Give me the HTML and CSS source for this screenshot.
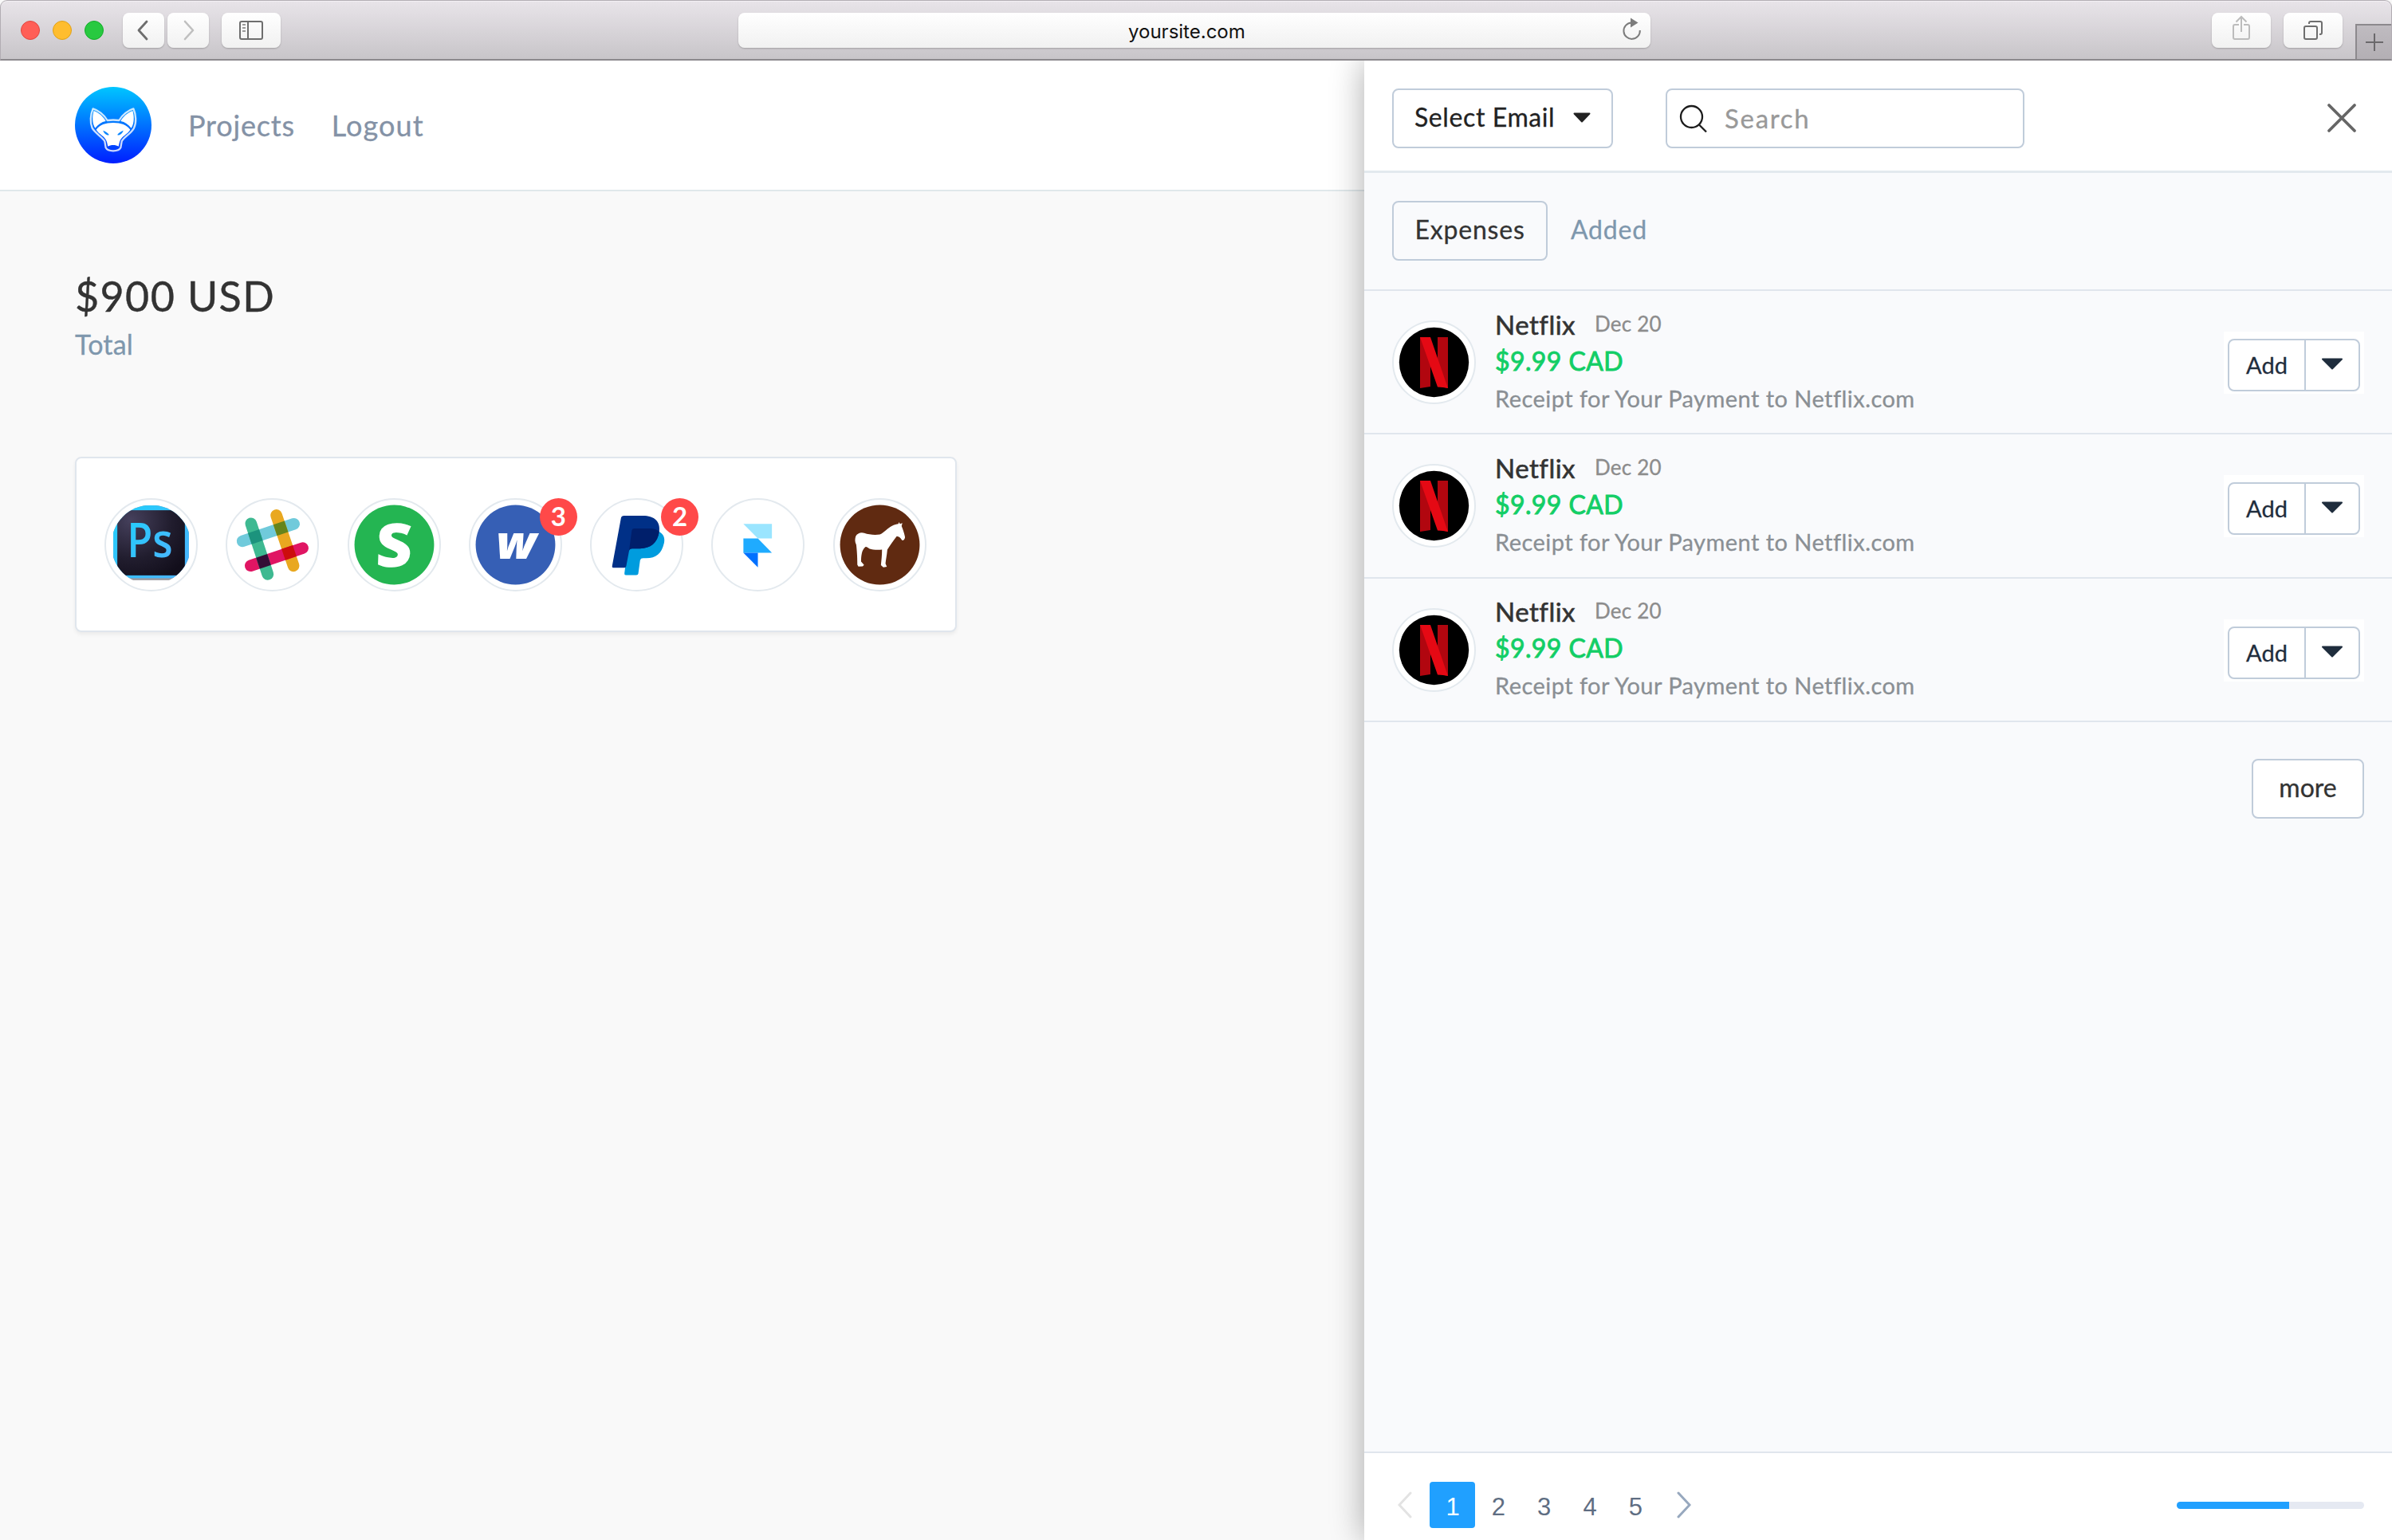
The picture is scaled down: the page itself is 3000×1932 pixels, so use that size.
FILE: index.html
```html
<!DOCTYPE html>
<html lang="en">
<head>
<meta charset="utf-8">
<title>yoursite.com</title>
<link rel="stylesheet" href="styles.css">
</head>
<body>
<div class="browser">
  <header class="toolbar">
    <div class="lights"><i class="light red"></i><i class="light yellow"></i><i class="light green"></i></div>
    <div class="tool back"><svg width="16" height="28" viewBox="0 0 16 28"><path d="M13 3 3 14 13 25" fill="none" stroke="#6e6e6e" stroke-width="2.8" stroke-linecap="round" stroke-linejoin="round"/></svg></div>
    <div class="tool forward"><svg width="16" height="28" viewBox="0 0 16 28"><path d="M2 3 12 14 2 25" fill="none" stroke="#bfbfbf" stroke-width="2.6" stroke-linecap="round" stroke-linejoin="round"/></svg></div>
    <div class="tool side"><svg width="30" height="24" viewBox="0 0 30 24"><g fill="none" stroke="#6e6e6e" stroke-width="2"><rect x="1" y="1" width="28" height="22" rx="2"/><path d="M11 1V23"/></g><path d="M4 5H8M4 9H8M4 13H8" stroke="#9a9a9a" stroke-width="2"/></svg></div>
    <div class="address"><span class="url">yoursite.com</span>
      <svg class="reload" width="26" height="30" viewBox="0 0 26 30"><path d="M12 7.5A10.2 10.2 0 1 0 22.8 17" fill="none" stroke="#7c7c7c" stroke-width="2"/><path d="M11 1.5 20.5 7.5 11 13.5Z" fill="#7c7c7c"/></svg>
    </div>
    <div class="tool share"><svg width="24" height="32" viewBox="0 0 24 32"><g fill="none" stroke="#bcbcbc" stroke-width="2"><path d="M9 12H4A2 2 0 0 0 2 14V28A2 2 0 0 0 4 30H20A2 2 0 0 0 22 28V14A2 2 0 0 0 20 12H15"/><path d="M12 21V2M5.5 8.5 12 2 18.500 8.500"/></g></svg></div>
    <div class="tool tabs"><svg width="26" height="26" viewBox="0 0 26 26"><g fill="none" stroke="#6e6e6e" stroke-width="2"><rect x="2" y="8" width="16" height="16" rx="2"/><path d="M8 5V4A2 2 0 0 1 10 2H22A2 2 0 0 1 24 4V16A2 2 0 0 1 22 18H21"/></g></svg></div>
    <div class="newtab"><svg width="22" height="22" viewBox="0 0 22 22"><path d="M11 0V22M0 11H22" stroke="#6b696c" stroke-width="2"/></svg></div>
  </header>

  <div class="page">
    <main class="main">
      <nav class="nav">
        <svg class="logo" viewBox="6 5 288 288">
          <defs><linearGradient id="sky" x1="0" y1="0" x2="0" y2="1"><stop offset="0" stop-color="#00c6ff"/><stop offset="1" stop-color="#001eff"/></linearGradient></defs>
          <circle cx="150" cy="149" r="144" fill="url(#sky)"/>
          <path d="M74 87C92 92 116 110 128 131C142 129 158 129 172 131C184 110 208 92 226 87C236 110 238 140 228 160C218 180 190 194 182 210L178 234C170 250 130 250 122 234L118 210C110 194 82 180 71 160C62 140 64 110 74 87Z" fill="none" stroke="#fff" stroke-width="7" stroke-opacity=".8" stroke-linejoin="round"/>
          <g fill="#fff">
            <path d="M77 95C96 102 114 118 122 134C106 137 94 146 82 160C70 142 71 114 77 95Z"/>
            <path d="M223 95C204 102 186 118 178 134C194 137 206 146 218 160C230 142 229 114 223 95Z"/>
            <path d="M86 166C100 148 120 140 150 140C180 140 200 148 214 166C204 184 180 190 174 212L170 229C160 222 140 222 130 229L126 212C120 190 96 184 86 166Z"/>
          </g>
          <path d="M112 169C121 172 130 178 135 186C124 188 115 180 112 169ZM188 169C179 172 170 178 165 186C176 188 185 180 188 169Z" fill="#0a86ff"/>
        </svg>
        <a class="nav-link projects">Projects</a>
        <a class="nav-link logout">Logout</a>
      </nav>
      <section class="summary">
        <div class="total">$900 USD</div>
        <div class="total-label">Total</div>
        <div class="card">
          <div class="app">
            <svg class="app-icon" viewBox="0 0 116 116">
              <defs><clipPath id="disc"><circle cx="58" cy="58" r="49.500"/></clipPath>
              <radialGradient id="night" cx=".2" cy=".15" r="1"><stop offset="0" stop-color="#45405c"/><stop offset=".6" stop-color="#211d2e"/><stop offset="1" stop-color="#120e1b"/></radialGradient>
              <linearGradient id="cyan" x1="0" y1="0" x2="1" y2="1"><stop offset="0" stop-color="#1fd0fb"/><stop offset="1" stop-color="#4db2ff"/></linearGradient></defs>
              <g clip-path="url(#disc)"><rect x="11" y="9" width="94" height="93" fill="#9a9a9f"/><rect x="11" y="9" width="94" height="90.500" fill="url(#cyan)"/><rect x="16" y="15" width="84" height="81" fill="url(#night)"/></g>
              <text x="28" y="73.500" textLength="57" lengthAdjust="spacingAndGlyphs" font-family="Open Sans" font-weight="600" font-size="60" fill="url(#cyan)">Ps</text>
            </svg>
          </div>
          <div class="app">
            <svg class="app-icon" viewBox="0 0 116 116">
              <defs>
                <clipPath id="barGreen"><rect x="-7.300" y="-7.300" width="81" height="14.600" rx="7.300" transform="translate(31.500 31.500) rotate(71.700)"/></clipPath>
                <clipPath id="barYellow"><rect x="-7.300" y="-7.300" width="81" height="14.600" rx="7.300" transform="translate(63 21.200) rotate(71.200)"/></clipPath>
              </defs>
              <rect x="-7.300" y="-7.300" width="82" height="14.600" rx="7.300" transform="translate(21 53.400) rotate(-18.500)" fill="#70cadb"/>
              <rect x="-7.300" y="-7.300" width="81" height="14.600" rx="7.300" transform="translate(63 21.200) rotate(71.200)" fill="#e9a820"/>
              <rect x="-7.300" y="-7.300" width="83" height="14.600" rx="7.300" transform="translate(31 84) rotate(-18.700)" fill="#e01563"/>
              <rect x="-7.300" y="-7.300" width="81" height="14.600" rx="7.300" transform="translate(31.500 31.500) rotate(71.700)" fill="#3eb991"/>
              <g clip-path="url(#barGreen)">
                <rect x="-7.300" y="-7.300" width="82" height="14.600" transform="translate(21 53.400) rotate(-18.500)" fill="#1c937d"/>
                <rect x="-7.300" y="-7.300" width="83" height="14.600" transform="translate(31 84) rotate(-18.700)" fill="#340d35"/>
              </g>
              <g clip-path="url(#barYellow)">
                <rect x="20" y="-7.300" width="62" height="14.600" transform="translate(21 53.400) rotate(-18.500)" fill="#65841b"/>
                <rect x="20" y="-7.300" width="62" height="14.600" transform="translate(31 84) rotate(-18.700)" fill="#cc0d0d"/>
              </g>
            </svg>
          </div>
          <div class="app">
            <svg class="app-icon" viewBox="0 0 116 116"><circle cx="58" cy="58" r="49.500" fill="#24b552"/><text transform="translate(57 84.800) skewX(-2) scale(1.05 1)" text-anchor="middle" font-family="Open Sans" font-weight="800" font-size="75" fill="#fff">S</text></svg>
          </div>
          <div class="app">
            <svg class="app-icon" viewBox="0 0 116 116"><circle cx="58" cy="58" r="49.500" fill="#365fb5"/><text x="34" y="75" textLength="50" lengthAdjust="spacingAndGlyphs" font-family="Open Sans" font-style="italic" font-weight="800" font-size="58" fill="#fff">w</text></svg>
            <span class="badge">3</span>
          </div>
          <div class="app">
            <svg class="app-icon" viewBox="0 0 116 116">
              <path d="M86 42C91.500 44.500 93.500 50 92 56C89 69 82 74.700 70 74.700H66Q63 74.700 62.300 77L60 94Q59.700 95.700 57.500 95.700H44.500Q42.500 95.700 42.800 93.500L49 44Z" fill="#009cde"/>
              <path d="M38.600 24.200Q39 21.700 41.800 21.700H66C79 21.700 88 28 86 42C84 56 75 62.700 62 62.700H52Q49 62.700 48.500 66L45 84.500Q44.500 86.500 43 86.500H29Q27 86.500 27.500 84.500Z" fill="#003087"/>
              <path d="M52 40Q52.500 37.700 55 37.700H75Q82 37.700 86 41.500C84 56 75 62.700 62 62.700H52.500Q50 62.700 48.600 65Z" fill="#001f6b"/>
            </svg>
            <span class="badge">2</span>
          </div>
          <div class="app">
            <svg class="app-icon" viewBox="0 0 116 116"><path d="M40 32H75.500V50H58Z" fill="#9ae5ff"/><path d="M40 50H58L75.500 68H40Z" fill="#1fabff"/><path d="M40 68H58V86Z" fill="#0070ff"/></svg>
          </div>
          <div class="app">
            <svg class="app-icon" viewBox="0 0 116 116"><circle cx="58" cy="58" r="49.500" fill="#602a11"/>
              <path transform="translate(4 4.700) scale(.33333)" fill="#fff" d="M72 128C78 116 92 112 104 116C120 122 145 124 162 121C180 114 192 96 206 90C216 84 226 83 231 82L233 75L237 82L246 79L243 90C248 102 254 120 256 132C254 143 248 145 244 142C240 134 234 129 225 128C212 145 200 162 190 178C188 200 184 218 183 230L188 242L175 244L166 236C168 215 170 200 170 178C150 180 135 178 122 174C114 167 109 164 104 172C95 182 92 200 92 222L103 235L98 240L82 241L78 234C78 200 76 180 74 160C68 148 69 138 72 128Z"/>
            </svg>
          </div>
        </div>
      </section>
    </main>

    <aside class="panel">
      <div class="panel-head">
        <button class="select"><span class="select-label">Select Email</span><svg width="22" height="13" viewBox="0 0 22 13"><path d="M1.500 1.500H20.500L11 11.500Z" fill="#222" stroke="#222" stroke-width="2" stroke-linejoin="round"/></svg></button>
        <div class="search"><svg width="36" height="36" viewBox="0 0 36 36"><g fill="none" stroke="#1c1c1c" stroke-width="2.300"><circle cx="15.500" cy="15.500" r="13.500"/><path d="M25 25.500 34 34.500"/></g></svg><span class="placeholder">Search</span></div>
        <svg class="close" width="38" height="38" viewBox="0 0 38 38"><path d="M3 3 35 35M35 3 3 35" stroke="#666" stroke-width="3.800" stroke-linecap="round"/></svg>
      </div>
      <div class="panel-tabs"><button class="tab-on">Expenses</button><a class="tab-off">Added</a></div>
      <div class="rows">
        <div class="row">
          <svg class="avatar" viewBox="0 0 105 105"><circle cx="52.500" cy="52.500" r="51.500" fill="#fff" stroke="#e3e9ee" stroke-width="2"/><circle cx="52.500" cy="52.500" r="43.700"/><path d="M35 21H48V83L35 85ZM57 21H70V85L57 82Z" fill="#b1060f"/><path d="M35 21H48L70 85Q64 83.500 57 83.500Z" fill="#e50914"/></svg>
          <div class="info"><div class="line1"><span class="name">Netflix</span><span class="date">Dec 20</span></div><div class="line2">$9.99 CAD</div><div class="line3">Receipt for Your Payment to Netflix.com</div></div>
          <div class="add"><div class="split"><span class="add-label">Add</span><span class="add-caret"><svg width="28" height="15" viewBox="0 0 28 15"><path d="M2 1.500H26L14 13.500Z" fill="#1f2d3d" stroke="#1f2d3d" stroke-width="2" stroke-linejoin="round"/></svg></span></div></div>
        </div>
        <div class="row">
          <svg class="avatar" viewBox="0 0 105 105"><circle cx="52.500" cy="52.500" r="51.500" fill="#fff" stroke="#e3e9ee" stroke-width="2"/><circle cx="52.500" cy="52.500" r="43.700"/><path d="M35 21H48V83L35 85ZM57 21H70V85L57 82Z" fill="#b1060f"/><path d="M35 21H48L70 85Q64 83.500 57 83.500Z" fill="#e50914"/></svg>
          <div class="info"><div class="line1"><span class="name">Netflix</span><span class="date">Dec 20</span></div><div class="line2">$9.99 CAD</div><div class="line3">Receipt for Your Payment to Netflix.com</div></div>
          <div class="add"><div class="split"><span class="add-label">Add</span><span class="add-caret"><svg width="28" height="15" viewBox="0 0 28 15"><path d="M2 1.500H26L14 13.500Z" fill="#1f2d3d" stroke="#1f2d3d" stroke-width="2" stroke-linejoin="round"/></svg></span></div></div>
        </div>
        <div class="row">
          <svg class="avatar" viewBox="0 0 105 105"><circle cx="52.500" cy="52.500" r="51.500" fill="#fff" stroke="#e3e9ee" stroke-width="2"/><circle cx="52.500" cy="52.500" r="43.700"/><path d="M35 21H48V83L35 85ZM57 21H70V85L57 82Z" fill="#b1060f"/><path d="M35 21H48L70 85Q64 83.500 57 83.500Z" fill="#e50914"/></svg>
          <div class="info"><div class="line1"><span class="name">Netflix</span><span class="date">Dec 20</span></div><div class="line2">$9.99 CAD</div><div class="line3">Receipt for Your Payment to Netflix.com</div></div>
          <div class="add"><div class="split"><span class="add-label">Add</span><span class="add-caret"><svg width="28" height="15" viewBox="0 0 28 15"><path d="M2 1.500H26L14 13.500Z" fill="#1f2d3d" stroke="#1f2d3d" stroke-width="2" stroke-linejoin="round"/></svg></span></div></div>
        </div>
      </div>
      <div class="more-wrap"><button class="more">more</button></div>
      <footer class="pager">
        <svg class="prev" width="18" height="34" viewBox="0 0 18 34"><path d="M16 2 2 17 16 32" fill="none" stroke="#e3e3e3" stroke-width="3" stroke-linecap="round"/></svg>
        <div class="pages"><span class="num on">1</span><span class="num">2</span><span class="num">3</span><span class="num">4</span><span class="num">5</span></div>
        <svg class="next" width="18" height="34" viewBox="0 0 18 34"><path d="M2 2 16 17 2 32" fill="none" stroke="#97a8be" stroke-width="3" stroke-linecap="round"/></svg>
        <div class="progress"><div class="progress-fill" style="width:60%"></div></div>
      </footer>
    </aside>
  </div>
</div>
</body>
</html>
```
FILE: styles.css
```css
* { box-sizing: border-box; }
body { margin: 0; background: #f9f9f9; font-family: Lato, "Liberation Sans", sans-serif; color: #333; }
svg { display: block; flex: none; }
button { font: inherit; color: inherit; padding: 0; background: none; letter-spacing: inherit; }
.browser { width: 3000px; height: 1932px; display: flex; flex-direction: column; overflow: hidden; }

.toolbar { position: relative; z-index: 2; flex: none; height: 76px; display: flex; align-items: flex-start; background: linear-gradient(#e8e4e9, #c8c5c9); border: 1px solid #b2adb3; border-bottom: 2px solid #8c898d; border-radius: 9px 9px 0 0; padding: 15px 0 0 25px; box-shadow: inset 0 1px #f3f0f4; }
.lights { display: flex; gap: 16px; padding-top: 10px; width: 128px; }
.light { width: 24px; height: 24px; border-radius: 50%; }
.red { background: #ff5f57; border: 1px solid #e2463f; }
.yellow { background: #ffbd2e; border: 1px solid #e1a116; }
.green { background: #28c940; border: 1px solid #12ac28; }
.tool { height: 44px; border-radius: 8px; background: linear-gradient(#fff, #f1f1f1); box-shadow: 0 1px 2px rgba(0,0,0,.22); display: flex; align-items: center; justify-content: center; }
.back { width: 52px; }
.back svg { margin-left: -3px; }
.forward { width: 52px; margin-left: 4px; }
.forward svg { margin-left: 4px; }
.side { width: 74px; margin-left: 16px; }
.address { width: 1144px; height: 44px; margin-left: 574px; border-radius: 8px; background: linear-gradient(#fff, #f1f1f1); box-shadow: 0 1px 2px rgba(0,0,0,.22); display: flex; align-items: center; padding-left: 489px; }
.url { font: 24px/44px Inter, sans-serif; color: #111; width: 619px; padding-top: 3px; }
.reload { margin-top: -4px; }
.share { width: 74px; margin-left: 704px; }
.share svg { margin-top: -6px; }
.tabs { width: 74px; margin-left: 16px; }
.newtab { width: 45px; height: 44px; margin: 14px 0 0 16px; background: linear-gradient(#bfbbc0, #b3afb4); border: 2px solid #8c898d; border-width: 2px 0 0 2px; display: flex; align-items: center; justify-content: center; }

.page { flex: 1; display: flex; min-height: 0; }
.main { width: 1711px; flex: none; background: #f9f9f9; }
.nav { height: 164px; background: #fff; border-bottom: 2px solid #e0e8eb; display: flex; align-items: center; padding-left: 94px; }
.logo { width: 96px; height: 96px; margin-right: 46px; }
.nav-link { font-size: 36px; color: #8492a6; -webkit-text-stroke: .3px currentColor; }
.projects { margin-right: 46px; letter-spacing: .8px; }
.logout { letter-spacing: 1.1px; }
.summary { padding: 101px 94px 0; }
.total { font-size: 52px; line-height: 60px; color: #333; letter-spacing: 1.4px; -webkit-text-stroke: .4px currentColor; }
.total-label { font-size: 34px; line-height: 44px; margin-top: 9px; color: #7e97ad; letter-spacing: .2px; -webkit-text-stroke: .3px currentColor; }
.card { width: 1106px; height: 220px; margin-top: 119px; background: #fff; border: 2px solid #e0e6ed; border-radius: 8px; box-shadow: 0 3px 5px rgba(0,0,0,.06); display: flex; align-items: center; gap: 35.300px; padding-left: 35px; }
.app { position: relative; width: 117px; height: 117px; border: 2px solid #e3e9ee; border-radius: 50%; flex: none; }
.app-icon { width: 117px; height: 117px; margin: -2px; }
.badge { position: absolute; top: -2px; right: -21px; width: 47px; height: 47px; border-radius: 50%; background: #ff4949; color: #fff; font-size: 33px; line-height: 45px; font-weight: 700; text-align: center; }

.panel { position: relative; flex: 1; background: #f9fafc; box-shadow: 0 0 40px rgba(0,0,0,.33); display: flex; flex-direction: column; -webkit-text-stroke: .3px currentColor; }
.panel-head { height: 141px; background: #fff; border-bottom: 3px solid #e3e9ee; display: flex; align-items: flex-start; padding: 35px 44px 0 35px; font-size: 32px; }
.select { width: 277px; height: 75px; border: 2px solid #c0ccda; border-radius: 8px; background: #fff; color: #222; display: flex; align-items: center; justify-content: space-between; padding: 0 26px 2px 26px; letter-spacing: .6px; }
.select-label { padding-bottom: 2px; }
.search { width: 450px; height: 75px; margin-left: 66px; border: 2px solid #c0ccda; border-radius: 8px; display: flex; align-items: center; padding-left: 15px; gap: 21px; color: #999; font-size: 33px; letter-spacing: 1.7px; }
.placeholder { padding-bottom: 2px; }
.close { margin: 18px 0 0 auto; }
.panel-tabs { height: 148px; border-bottom: 2px solid #e0e6ed; display: flex; align-items: center; padding: 0 0 1px 35px; font-size: 32px; letter-spacing: .8px; }
.tab-on { width: 195px; height: 75px; border: 2px solid #c0ccda; border-radius: 8px; padding-bottom: 4px; }
.tab-off { margin-left: 29px; color: #7e97ad; padding-bottom: 4px; }
.row { height: 180.300px; border-bottom: 2px solid #e0e6ed; display: flex; align-items: center; padding: 0 35px; }
.avatar { width: 105px; height: 105px; margin: 1px 24px 0 0; }
.info { flex: 1; }
.line1 { height: 45px; line-height: 44px; display: flex; }
.name { font-size: 33px; letter-spacing: .5px; -webkit-text-stroke: .6px currentColor; }
.date { font-size: 26px; line-height: 42px; color: #8c8c8c; margin-left: 24px; letter-spacing: .2px; }
.line2 { font-size: 32px; line-height: 46px; color: #13ce66; letter-spacing: .4px; -webkit-text-stroke: .9px currentColor; }
.line3 { font-size: 29px; line-height: 48px; color: #8a8f94; letter-spacing: .45px; }
.add { width: 176px; height: 78px; margin-top: 2px; background: #fff; padding: 9px 5px 3px; }
.split { height: 66px; border: 2px solid #c0ccda; border-radius: 8px; display: flex; font-size: 29px; color: #1f2d3d; }
.add-label { width: 96px; border-right: 2px solid #c0ccda; display: flex; align-items: center; justify-content: center; padding-bottom: 1px; }
.add-caret { flex: 1; display: flex; justify-content: center; padding-top: 22px; }
.more-wrap { flex: 1; display: flex; justify-content: flex-end; padding: 46px 35px 0; }
.more { width: 141px; height: 75px; border: 2px solid #c0ccda; border-radius: 8px; background: #fff; font-size: 32px; padding-bottom: 4px; }
.pager { height: 111px; background: #fff; border-top: 2px solid #e0e6ed; display: flex; align-items: flex-start; padding: 36px 35px 0 42px; }
.prev, .next { margin-top: 12px; }
.pages { display: flex; margin-left: 22px; }
.num { width: 57.300px; height: 58px; font: 31px/63px "Liberation Sans", Arial, sans-serif; color: #5e6d82; text-align: center; -webkit-text-stroke: 0; padding-left: 1px; }
.on { background: #20a0ff; color: #fff; border-radius: 4px; }
.next { margin-left: 24px; }
.progress { width: 235px; height: 9px; margin: 25px 0 0 auto; border-radius: 5px; background: #e5e9f2; overflow: hidden; }
.progress-fill { height: 9px; background: #20a0ff; }
```
